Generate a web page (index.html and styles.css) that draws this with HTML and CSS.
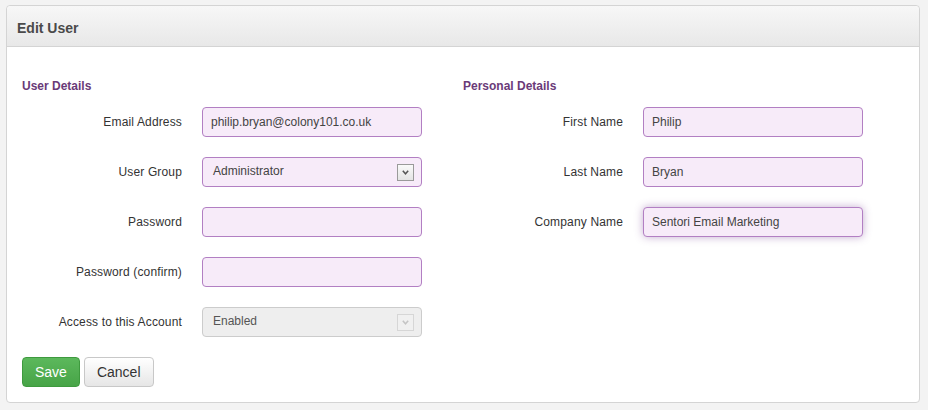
FILE: index.html
```html
<!DOCTYPE html>
<html>
<head>
<meta charset="utf-8">
<link rel="stylesheet" href="styles.css">
</head>
<body>
<div class="panel">
  <div class="panel-header">Edit User</div>
  <div class="panel-body">
    <div class="columns">
      <div class="col">
        <div class="section-title">User Details</div>
        <div class="row"><label>Email Address</label><div class="field">philip.bryan@colony101.co.uk</div></div>
        <div class="row"><label>User Group</label><div class="field select">Administrator<span class="arrow"><svg width="7" height="5" viewBox="0 0 7 5"><path d="M0.8 0.8 L3.5 3.8 L6.2 0.8" fill="none" stroke="#555" stroke-width="1.5"/></svg></span></div></div>
        <div class="row"><label>Password</label><div class="field"></div></div>
        <div class="row"><label>Password (confirm)</label><div class="field"></div></div>
        <div class="row"><label>Access to this Account</label><div class="field select disabled">Enabled<span class="arrow"><svg width="7" height="5" viewBox="0 0 7 5"><path d="M0.8 0.8 L3.5 3.8 L6.2 0.8" fill="none" stroke="#c4c4c4" stroke-width="1.5"/></svg></span></div></div>
      </div>
      <div class="col">
        <div class="section-title">Personal Details</div>
        <div class="row"><label>First Name</label><div class="field">Philip</div></div>
        <div class="row"><label>Last Name</label><div class="field">Bryan</div></div>
        <div class="row"><label>Company Name</label><div class="field focus">Sentori Email Marketing</div></div>
      </div>
    </div>
    <div class="actions">
      <button class="btn btn-save">Save</button>
      <button class="btn btn-cancel">Cancel</button>
    </div>
  </div>
</div>
</body>
</html>
```

FILE: styles.css
```css
html, body {
  margin: 0;
  padding: 0;
  background: #f3f3f3;
  font-family: "Liberation Sans", Arial, sans-serif;
  font-size: 12px;
  color: #333;
}
.panel {
  margin: 5px 0 0 6px;
  width: 912px;
  height: 396px;
  background: #fff;
  border: 1px solid #d4d4d4;
  border-radius: 4px;
}
.panel-header {
  box-sizing: border-box;
  height: 41px;
  line-height: 40px;
  padding: 2px 0 0 10px;
  font-size: 14px;
  font-weight: bold;
  color: #4a4a4a;
  background: linear-gradient(#f7f7f7, #e8e8e8);
  border-bottom: 1px solid #d4d4d4;
  border-radius: 4px 4px 0 0;
}
.panel-body {
  padding: 31px 15px 0 15px;
}
.columns {
  display: flex;
}
.col {
  width: 441px;
}
.section-title {
  font-weight: bold;
  color: #6a3a78;
  line-height: 16px;
  height: 16px;
  margin-bottom: 13px;
}
.row {
  display: flex;
  align-items: center;
  height: 30px;
  margin-bottom: 20px;
}
.row label {
  width: 160px;
  text-align: right;
  margin-right: 20px;
  color: #333;
  letter-spacing: 0.15px;
}
.field {
  position: relative;
  box-sizing: border-box;
  width: 220px;
  height: 30px;
  line-height: 28px;
  padding: 0 8px;
  background: #f7ebf9;
  border: 1px solid #b27fc3;
  border-radius: 4px;
  color: #444;
}
.field.select {
  padding-left: 10px;
  line-height: 26px;
}
.field.focus {
  box-shadow: 0 0 8px rgba(125, 70, 150, 0.45);
}
.field.disabled {
  background: #eeeeee;
  border-color: #cccccc;
  color: #555;
}
.arrow {
  position: absolute;
  right: 7px;
  top: 6px;
  box-sizing: border-box;
  width: 17px;
  height: 17px;
  border: 1px solid #9a9a9a;
  background: linear-gradient(#fafafa, #e4e4e4);
  display: flex;
  align-items: center;
  justify-content: center;
}
.disabled .arrow {
  border-color: #d6d6d6;
  background: #f0f0f0;
}
.actions {
  display: flex;
  gap: 4px;
}
.btn {
  height: 30px;
  padding: 0 12px;
  font-family: "Liberation Sans", Arial, sans-serif;
  font-size: 14px;
  border-radius: 4px;
  cursor: pointer;
}
.btn-save {
  color: #fff;
  background: linear-gradient(#5cb85c, #47a447);
  border: 1px solid #3e9a3e;
}
.btn-cancel {
  color: #333;
  background: linear-gradient(#ffffff, #e6e6e6);
  border: 1px solid #c8c8c8;
}
```
